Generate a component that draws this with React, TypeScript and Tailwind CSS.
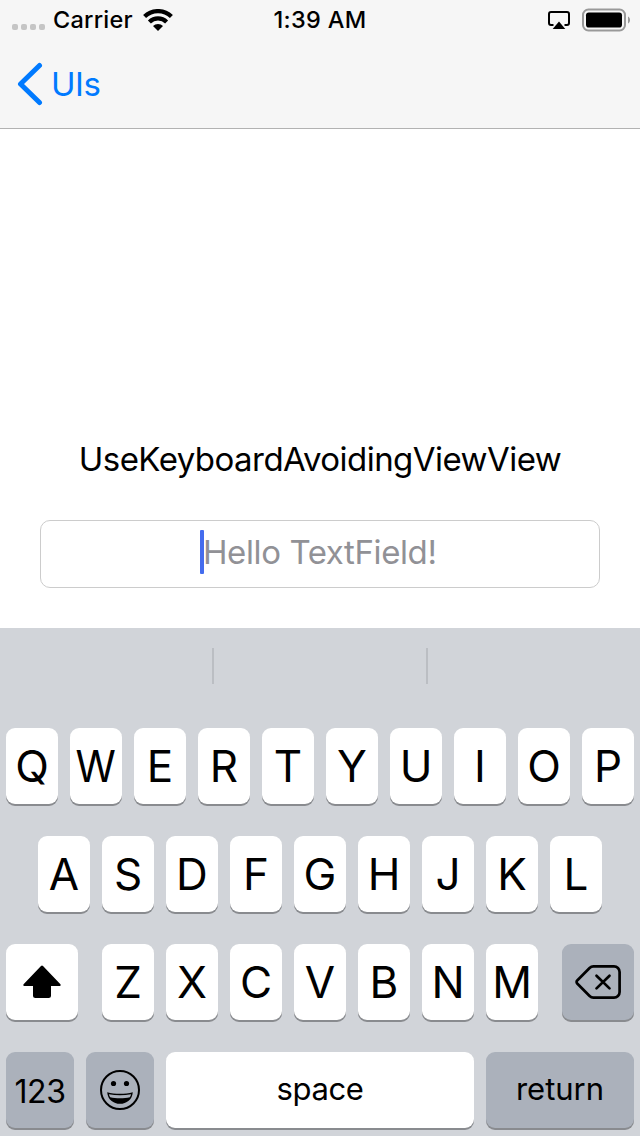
import type { ReactNode } from "react";

const KEY = "flex h-[76px] items-center justify-center rounded-[9px] text-black shadow-[0_2px_0_#898b8f]";

function Key({ className = "w-[52px] bg-white", children }: { className?: string; children: ReactNode }) {
  return <button className={`${KEY} ${className}`}>{children}</button>;
}

function Letters({ letters }: { letters: string }) {
  return (
    <>
      {letters.split("").map((letter) => (
        <Key key={letter}>
          <span className={`text-[44px] leading-none ${letter === "W" ? "scale-x-93" : ""}`}>{letter}</span>
        </Key>
      ))}
    </>
  );
}

function StatusBar() {
  return (
    <div className="grid h-10 grid-cols-3 items-center text-[23.5px] leading-none font-medium">
      <div className="flex items-center">
        <div className="mt-[14px] ml-3 flex gap-[3px]">
          <i className="size-[6px] rounded-[2px] bg-[#c5c5c5]" />
          <i className="size-[6px] rounded-[2px] bg-[#c5c5c5]" />
          <i className="size-[6px] rounded-[2px] bg-[#c5c5c5]" />
          <i className="size-[6px] rounded-[2px] bg-[#c5c5c5]" />
        </div>
        <span className="ml-2 w-[82px] tracking-[0.25px] whitespace-nowrap">Carrier</span>
        <svg className="ml-[8px] h-[22px] w-[30px] shrink-0" viewBox="0 0 30 22">
          <g fill="none" stroke="#000" strokeWidth="4.2">
            <path d="M1.6 7.6a19 19 0 0 1 26.8 0" />
            <path d="M6.4 12.900a12.200 12.200 0 0 1 17.200 0" />
          </g>
          <path d="M10 17a7 7 0 0 1 10 0L15 22Z" />
        </svg>
      </div>
      <span className="text-center tracking-[0.3px] whitespace-nowrap">1:39 AM</span>
      <div className="flex items-center justify-end">
        <svg className="-mt-px mr-3 h-5 w-[22px]" viewBox="0 0 22 20">
          <path d="M5.500 15H3a2 2 0 0 1-2-2V4a2 2 0 0 1 2-2h16a2 2 0 0 1 2 2v9a2 2 0 0 1-2 2h-2.500" fill="none" stroke="#000" strokeWidth="2" />
          <path d="M11 11.500 17.300 19H4.700Z" />
        </svg>
        <svg className="mr-[10px] h-[24px] w-[48px]" viewBox="0 0 48 24">
          <rect x="1" y="1.500" width="42" height="21" rx="5.500" fill="none" stroke="#999" strokeWidth="2" />
          <rect x="4" y="4.500" width="36" height="15" rx="2.800" />
          <path d="M46 8.500c2.700 1.200 2.700 5.800 0 7Z" fill="#999" />
        </svg>
      </div>
    </div>
  );
}

function Keyboard() {
  return (
    <section className="h-[508px] bg-[#d1d4d9]">
      <div className="flex h-[100px] pt-5">
        <div className="h-9 w-[214px] border-r-2 border-[#bbbec3]" />
        <div className="h-9 w-[214px] border-r-2 border-[#bbbec3]" />
      </div>
      <div className="flex flex-col gap-8 px-[6px]">
        <div className="flex gap-3">
          <Letters letters="QWERTYUIOP" />
        </div>
        <div className="flex justify-center gap-3">
          <Letters letters="ASDFGHJKL" />
        </div>
        <div className="flex justify-between">
          <Key className="w-[72px] bg-white">
            <svg className="h-[34px] w-[38px]" viewBox="0 0 38 34">
              <path d="M18 .9a1.400 1.400 0 0 1 2 0L37.200 19c.9 1 .5 2-.8 2H28v9.500a2.500 2.500 0 0 1-2.500 2.500h-13a2.500 2.500 0 0 1-2.500-2.500V21H1.600C.3 21-.1 20 .8 19Z" />
            </svg>
          </Key>
          <div className="flex gap-3">
            <Letters letters="ZXCVBNM" />
          </div>
          <Key className="w-[72px] bg-[#abb1bb]">
            <svg className="h-[34px] w-[46px]" viewBox="0 0 46 34" fill="none" stroke="#000" strokeWidth="2.700" strokeLinecap="round" strokeLinejoin="round">
              <path d="M18.500 1.400H39a5.600 5.600 0 0 1 5.600 5.600v20a5.600 5.600 0 0 1-5.600 5.600H18.500a5.500 5.500 0 0 1-3.900-1.600L2.200 18.500a2.100 2.100 0 0 1 0-3L14.600 3a5.500 5.500 0 0 1 3.900-1.600Z" />
              <path d="m21.500 10.800 13 12.600m0-12.600-13 12.600" />
            </svg>
          </Key>
        </div>
        <div className="flex gap-3 text-[31px] leading-none">
          <Key className="w-[68px] bg-[#abb1bb]">
            <span className="pt-[3px] text-[32px] tracking-[-0.5px]">123</span>
          </Key>
          <Key className="w-[68px] bg-[#abb1bb]">
            <svg className="size-10" viewBox="0 0 40 40">
              <circle cx="20" cy="20" r="19" fill="none" stroke="#000" strokeWidth="2" />
              <circle cx="13.500" cy="13.500" r="2.600" />
              <circle cx="26.500" cy="13.500" r="2.600" />
              <path d="M7.200 22.200c7.500 2 18.100 2 25.600 0C32.300 29.500 26.500 33.800 20 33.800S7.700 29.500 7.200 22.200Z" />
              <path d="M8.900 24.200c6.900 1.500 15.300 1.500 22.200 0-.3 1.300-.7 2.200-1.300 3.100-5.700 1.400-13.900 1.400-19.600 0-.6-.9-1-1.800-1.300-3.100Z" fill="#abb1bb" />
            </svg>
          </Key>
          <Key className="w-[308px] bg-white">
            <span className="pb-[3px] tracking-[-0.4px]">space</span>
          </Key>
          <Key className="w-[148px] bg-[#abb1bb]">
            <span className="pb-[3px]">return</span>
          </Key>
        </div>
      </div>
    </section>
  );
}

export default function App() {
  return (
    <main className="flex h-[1136px] w-[640px] flex-col overflow-hidden bg-white font-['Inter',sans-serif] text-black">
      <header className="h-[129px] border-b border-[#b2b2b2] bg-[#f6f6f6]">
        <StatusBar />
        <button className="mt-[22px] ml-[17px] flex h-11 items-center text-[#007aff]">
          <svg className="h-[44px] w-[26px]" viewBox="0 0 26 44" fill="none" stroke="currentColor" strokeWidth="5" strokeLinecap="round" strokeLinejoin="round">
            <path d="M22.500 3.500 3.500 22l19 18.500" />
          </svg>
          <span className="ml-[8px] text-[33px] leading-none tracking-[-0.5px]">UIs</span>
        </button>
      </header>
      <section className="flex flex-1 flex-col items-center justify-end pb-10">
        <h1 className="mb-[41px] text-[33px] leading-[40px] tracking-[-0.55px] whitespace-nowrap">UseKeyboardAvoidingViewView</h1>
        <div className="flex h-[68px] w-[560px] items-center rounded-[10px] border border-[#cccccc] pl-[159px]">
          <span className="mt-[-4px] h-11 w-1 rounded-[1px] bg-[#446cee]" />
          <span className="-mt-[3px] ml-[-1px] text-[33px] leading-none tracking-[-0.4px] whitespace-nowrap text-[#919196]">Hello TextField!</span>
        </div>
      </section>
      <Keyboard />
    </main>
  );
}
